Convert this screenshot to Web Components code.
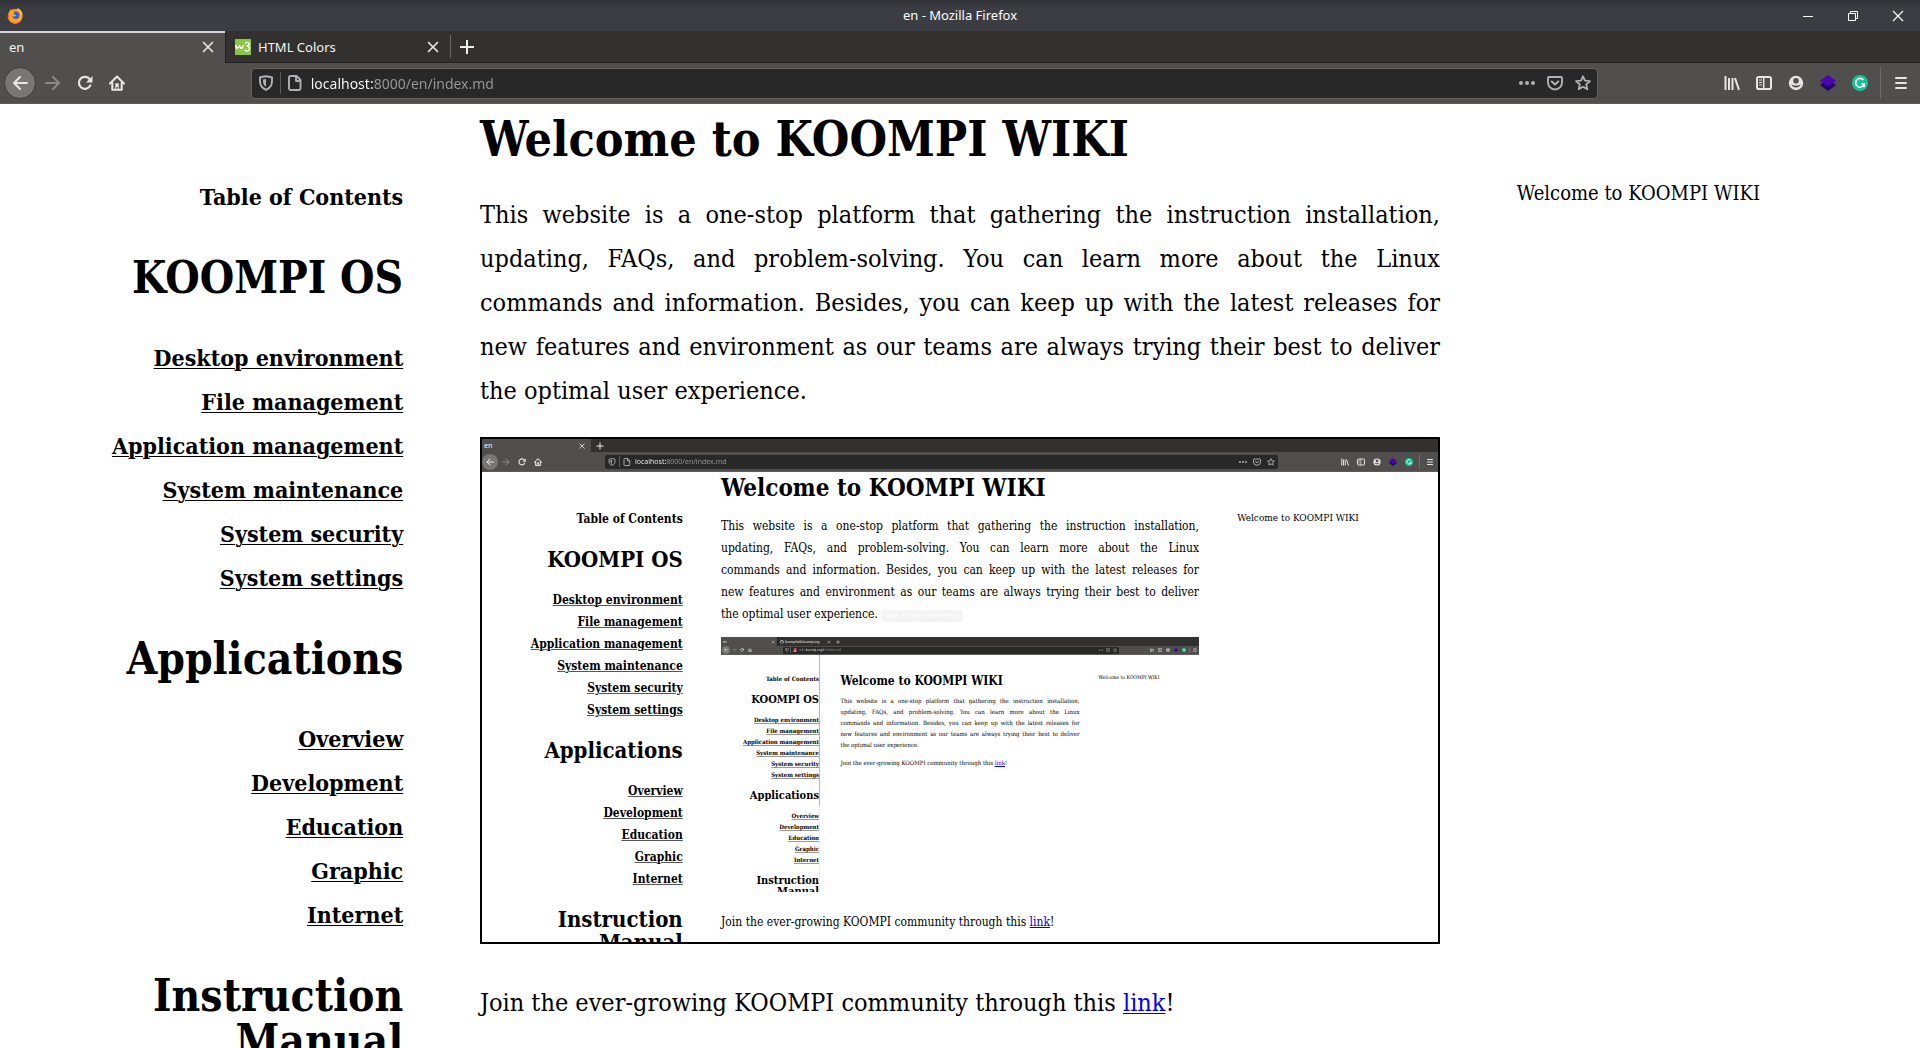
<!DOCTYPE html>
<html lang="en">
<head>
<meta charset="utf-8">
<title>en - Mozilla Firefox</title>
<style>
html,body{margin:0;background:#fff}
body{height:100vh;overflow:hidden}
</style>
</head>
<body>
<browser-window level="1"></browser-window>
<script>
const ICONS={
firefox:'<circle cx="8" cy="8.4" r="7.3" fill="#ff9a1f"/><path d="M1 6C.4 12 4 15.7 8.200 15.700c3.500 0 6-2 7-5-2 2-5 2.600-7.500 1.500C4.500 11 3.500 8 4.500 4z" fill="#ff5a22"/><circle cx="8.300" cy="7.500" r="4" fill="#3b5bd8"/><path d="M2 7c0-3 1-5 2-6 .2 1.500 1 2.200 2.300 2.600C7.800 4 7.500 5.500 6 6c1.500.3 2.500 1 3.500 1-1 2-3.500 2-4.500 1 .5 2.500 3.500 4 6 2.500 3-1.700 3-5 1.200-8C15 4 16 7 15.200 10 13.500 15.500 6 16.500 3 12.500 1.800 11 1.700 9 2 7z" fill="#ffa51e"/><path d="M9.500 1.500c2.500.5 4.500 3 4.700 6l1.300-1C15.500 4 13.500 1 10.500.2z" fill="#ffce3a"/>',
w3:'<rect width="16" height="16" fill="#8cc63f"/><path d="M0.500 6l.8 3h1.600L4.600 7l1 2h1.600L8.700 6M10 4.500c.8-1.700 4-1.500 4 .6 0 1.600-1.500 1.900-2.500 1.900 1.400 0 3 .5 3 2.600 0 2.800-3.800 3-4.800 1" fill="none" stroke="#fff" stroke-width="1.500"/>',
git:'<path fill="#fff" d="M8 1a7 7 0 0 0-2.300 13.600v-2.400C3.500 12.500 3.500 10.500 2.500 10.500c1.500-.5 2 1.300 3.300.8C3 10.800 3 7 4.300 5.800L4.400 4l2 .8h3.200l2-.8.1 1.800c1.300 1.500 1 5-1.600 5.500v3.300A7 7 0 0 0 8 1z"/>',
close:'<path d="M3.500 3.500l9 9m0-9l-9 9" stroke="currentColor" stroke-width="1.700" stroke-linecap="round"/>',
plus:'<path d="M8 1v14M1 8h14" stroke="currentColor" stroke-width="2"/>',
back:'<path d="M15 8H2m6-6L2 8l6 6" fill="none" stroke="currentColor" stroke-width="2" stroke-linecap="round" stroke-linejoin="round"/>',
forward:'<path d="M1 8h13M8 2l6 6-6 6" fill="none" stroke="currentColor" stroke-width="2" stroke-linecap="round" stroke-linejoin="round"/>',
reload:'<path d="M13.300 10.500A6 6 0 1 1 12.800 4.300" fill="none" stroke="currentColor" stroke-width="2.200" stroke-linecap="round"/><path d="M15.500 1v6.500H9z" fill="currentColor"/>',
home:'<path d="M1 8.500L8 1.500l7 7M3.300 8v6.700h9.400V8" fill="none" stroke="currentColor" stroke-width="2.100" stroke-linecap="round" stroke-linejoin="round"/><path d="M6.300 14.500V8.300h3.400v6.200H8.800V12H7.300v2.500z" fill="currentColor"/>',
shield:'<path d="M8 1.300c2 .2 4 .5 6 1.200v3.700c0 4.300-2.300 7-6 8.600-3.700-1.600-6-4.300-6-8.600V2.500C4 1.800 6 1.500 8 1.300z" fill="none" stroke="currentColor" stroke-width="1.900"/><path d="M8 4c-1 .1-2 .3-3 .6v2c0 2.300 1 4 3 5.200z" fill="currentColor"/>',
page:'<path d="M3.500 1h6l4 4v8.500a1.500 1.500 0 0 1-1.500 1.500H3.500A1.500 1.500 0 0 1 2 13.500v-11A1.500 1.500 0 0 1 3.500 1zM9 1.500V6h4.500" fill="none" stroke="currentColor" stroke-width="1.900" stroke-linejoin="round"/>',
insecure:'<rect x="3" y="7" width="10" height="8" rx="1" fill="#ccc"/><path d="M5 7V4.500a3 3 0 0 1 6 0V7" fill="none" stroke="#ccc" stroke-width="2"/><path d="M1 15L14 2" stroke="#f03a50" stroke-width="4"/>',
dots:'<circle cx="2" cy="8" r="2" fill="currentColor"/><circle cx="8" cy="8" r="2" fill="currentColor"/><circle cx="14" cy="8" r="2" fill="currentColor"/>',
pocket:'<path d="M2 2h12a1 1 0 0 1 1 1v4.500a7 7 0 0 1-14 0V3a1 1 0 0 1 1-1z" fill="none" stroke="currentColor" stroke-width="1.900"/><path d="M4.700 6.500L8 9.500l3.300-3" fill="none" stroke="currentColor" stroke-width="2" stroke-linecap="round" stroke-linejoin="round"/>',
star:'<path d="M8 1.300l2 4.400 4.900.5-3.700 3.200 1.100 4.900L8 11.800l-4.300 2.500 1.100-4.900L1.100 6.200 6 5.700z" fill="none" stroke="currentColor" stroke-width="1.800" stroke-linejoin="round"/>',
library:'<path d="M1.500 1v14M5 3v12M8.500 3v12M11 3l4 12" stroke="currentColor" stroke-width="2"/>',
sidebar:'<rect x="1" y="2" width="14" height="12" rx="1.800" fill="none" stroke="currentColor" stroke-width="2"/><path d="M7.700 2v12" stroke="currentColor" stroke-width="1.500"/><path d="M3 5h3M3 7.500h3M3 10h3" stroke="currentColor"/>',
account:'<circle cx="8" cy="8" r="7.200" fill="currentColor"/><circle cx="8" cy="5.800" r="2.800" fill="#514f4d"/><path d="M3.300 9c1 4.700 8.400 4.700 9.400 0-1.500 2-7.900 2-9.400 0z" fill="#514f4d"/>',
cube:'<path d="M8 4.500l8 5.500-8 6-8-6z" fill="#210070"/><path d="M8 0l8 5.800-8 6-8-6z" fill="#4a05b0"/>',
grammarly:'<circle cx="8" cy="8" r="8" fill="#15c39a"/><path d="M11.500 5A4.400 4.400 0 1 0 12.300 9H9.500m2.700 0v3" fill="none" stroke="#fff" stroke-width="1.600"/>',
menu:'<path d="M3 3h10M3 8h10M3 13h10" stroke="currentColor" stroke-width="2" stroke-linecap="round"/>',
min:'<path d="M3 8.500h10" stroke="currentColor"/>',
restore:'<path d="M3.500 5.500h7v7h-7zM5.500 5V3.500h7v7H11" fill="none" stroke="currentColor"/>',
winclose:'<path d="M3 3l10 10M13 3L3 13" stroke="currentColor" stroke-width="1.200"/>'
};

customElements.define('ui-icon',class extends HTMLElement{
  connectedCallback(){
    if(this.shadowRoot)return;
    this.attachShadow({mode:'open'}).innerHTML=`<style>:host{display:block;flex:none;width:var(--icon,16px);height:var(--icon,16px)}svg{display:block;width:100%;height:100%}</style><svg viewBox="0 0 16 16" fill="none" aria-hidden="true">${ICONS[this.getAttribute('name')]}</svg>`;
  }
});

customElements.define('title-bar',class extends HTMLElement{
  connectedCallback(){
    this.attachShadow({mode:'open'}).innerHTML=`<style>
    :host{display:grid;grid-template-columns:1fr auto 1fr;align-items:center;height:31px;background:linear-gradient(#2f3034,#3c3d43 8px);color:#fcfcfc;font:13px/29px "Noto Sans",sans-serif}
    .app{padding-left:7px}
    .win{display:flex;justify-content:flex-end}
    button{all:unset;width:45px;height:30px;display:grid;place-items:center}
    </style><span class="app"><ui-icon name="firefox"></ui-icon></span><slot></slot>
    <div class="win"><button aria-label="Minimize"><ui-icon name="min"></ui-icon></button><button aria-label="Restore"><ui-icon name="restore"></ui-icon></button><button aria-label="Close"><ui-icon name="winclose"></ui-icon></button></div>`;
  }
});

customElements.define('browser-tab',class extends HTMLElement{
  connectedCallback(){
    const icon=this.getAttribute('icon');
    this.attachShadow({mode:'open'}).innerHTML=`<style>
    :host{display:flex;align-items:center;box-sizing:border-box;width:var(--tab);padding:var(--tabpad);gap:var(--tabgap);color:#f5f5f5}
    :host([active]){background:#514f4d;box-shadow:inset 0 var(--topline) #d4d4d8}
    :host(:not([active])){border-left:1px solid #222;border-bottom:var(--edge) solid #232221}
    slot{display:block;flex:1;white-space:nowrap}
    button{all:unset;display:block;color:#e6e6e6;--icon:calc(var(--k)*4)}
    </style>${icon?`<ui-icon name="${icon}"></ui-icon>`:''}<slot></slot><button aria-label="Close tab"><ui-icon name="close"></ui-icon></button>`;
  }
});

customElements.define('browser-chrome',class extends HTMLElement{
  connectedCallback(){
    const b=(n,l,c='')=>`<button class="${c}" aria-label="${l}"><ui-icon name="${n}"></ui-icon></button>`;
    const third=this.getAttribute('level')==='3';
    const url=third?'wiki.koompi.org/en/index.md':'localhost:8000/en/index.md';
    this.attachShadow({mode:'open'}).innerHTML=`<style>
    :host{display:block;font:var(--ui)/normal "Noto Sans",sans-serif;--icon:calc(var(--k)*4)}
    .tabs{display:flex;height:var(--tabs);background:#33312f}
    .new{display:flex;flex:1;align-items:center;border-bottom:var(--edge) solid #232221;color:#f0f0f0}
    .new i{width:1px;height:75%;background:var(--sep)}
    .bar{display:flex;align-items:center;box-sizing:border-box;height:var(--bar);padding:0 var(--pad-right) 0 var(--pad-left);background:#514f4d;border-bottom:1px solid #5e5c5a;color:#e6e6e4}
    button{all:unset;flex:none;display:grid;place-items:center;width:calc(var(--k)*8);height:calc(var(--k)*8)}
    .back{box-sizing:border-box;margin-right:var(--edge);border-radius:50%;background:#787775;border:var(--edge) solid #3c3b3a}
    .off{color:#8b8a88}
    .spring{flex:7}
    form{display:flex;align-items:center;flex:80;box-sizing:border-box;height:var(--url);margin:0;border:var(--edge) solid #656462;border-radius:var(--k);background:#282828;color:#b1b1b3}
    form button{width:calc(var(--k)*7);height:100%}
    form i{width:1px;height:75%;background:#5c5c5c}
    input{all:unset;flex:1;min-width:0;font-size:var(--urlfont);padding-left:var(--line);color:transparent;background:${third?'linear-gradient(90deg,#999 8px,#fff 8px 26px,#999 26px)':'linear-gradient(90deg,#fff calc(var(--line) + var(--host)),#999 0)'};-webkit-background-clip:text;background-clip:text}
    .div{width:1px;height:80%;margin:0 var(--k);background:#6e6c6a}
    </style>
    <div class="tabs"><slot></slot><div class="new"><i></i>${b('plus','New tab')}</div></div>
    <div class="bar">${b('back','Back','back')}${b('forward','Forward','off')}${b('reload','Reload')}${b('home','Home')}
    <div class="spring"></div>
    <form>${b('shield','Tracking protection')}<i></i>${b(third?'insecure':'page','Site information')}<input aria-label="Address" value="${url}">${b('dots','Page actions')}${b('pocket','Save to Pocket')}${b('star','Bookmark')}</form>
    <div class="spring"></div>
    ${b('library','Library')}${b('sidebar','Sidebars')}${b('account','Account')}${b('cube','Cube')}${b('grammarly','Grammarly')}<span class="div"></span>${b('menu','Menu')}</div>`;
  }
});

customElements.define('wiki-toc',class extends HTMLElement{
  connectedCallback(){
    const list=(t,items)=>`<h2>${t}</h2><ul>${items.map(i=>`<li><a href="#">${i}</a></li>`).join('')}</ul>`;
    this.attachShadow({mode:'open'}).innerHTML=`<style>
    :host{display:block;text-align:right;font-weight:bold;font-size:var(--toc);line-height:var(--pitch);white-space:nowrap}
    p{margin:0}
    h2{margin:var(--before) 0 var(--after);font-size:var(--h2);line-height:var(--h2line)}
    ul{list-style:none;margin:0;padding:0}
    a{color:inherit;text-decoration-color:var(--rule);text-decoration-thickness:1px;text-underline-offset:var(--line)}
    </style><p>Table of Contents</p>
    ${list('KOOMPI OS',['Desktop environment','File management','Application management','System maintenance','System security','System settings'])}
    ${list('Applications',['Overview','Development','Education','Graphic','Internet'])}
    <h2>Instruction<br>Manual</h2>`;
  }
});

customElements.define('wiki-article',class extends HTMLElement{
  connectedCallback(){
    const n=+this.getAttribute('level');
    this.attachShadow({mode:'open'}).innerHTML=`<style>
    :host{display:block;font-size:var(--body);line-height:var(--pitch)}
    h1{margin:0 0 var(--gap);font-size:var(--h1);line-height:var(--h1line);white-space:nowrap}
    p{margin:0}
    .intro span{display:block;white-space:nowrap;text-align:justify;text-align-last:justify}
    .intro span:last-child{text-align-last:left}
    figure{box-sizing:border-box;margin:var(--gap) 0 var(--join);overflow:hidden}
    figure.first{border:2px solid #000;aspect-ratio:960/507}
    figure.second{aspect-ratio:480/256}
    .last{margin-top:var(--join)}
    a{color:#00e;text-decoration-thickness:1px;text-underline-offset:var(--line)}
    small{display:inline-block;margin-left:4px;padding:0 2px;background:#f3f3f3;color:#fff;font:7px/12px "Noto Sans",sans-serif}
    </style>
    <h1>Welcome to KOOMPI WIKI</h1>
    <p class="intro"><span>This website is a one-stop platform that gathering the instruction installation,</span><span>updating, FAQs, and problem-solving. You can learn more about the Linux</span><span>commands and information. Besides, you can keep up with the latest releases for</span><span>new features and environment as our teams are always trying their best to deliver</span><span>the optimal user experience.${n===2?'<small>Take a New Screenshot</small>':''}</span></p>
    ${n<3?`<figure class="${n===1?'first':'second'}"><browser-window level="${n+1}"></browser-window></figure>`:''}
    <p class="${n===3?'last':''}">Join the ever-growing KOOMPI community through this <a href="#">link</a>!</p>`;
  }
});

customElements.define('browser-window',class extends HTMLElement{
  connectedCallback(){
    const n=this.getAttribute('level');
    const tabs={1:'<browser-tab active>en</browser-tab><browser-tab icon="w3">HTML Colors</browser-tab>',2:'<browser-tab active>en</browser-tab>',3:'<browser-tab active>en</browser-tab><browser-tab icon="git">koompi/wiki.koompi.org</browser-tab>'}[n];
    this.attachShadow({mode:'open'}).innerHTML=`<style>
    :host{display:block;height:100%;overflow:hidden;background:#fff;color:#000;font-family:"DejaVu Serif Condensed","DejaVu Serif",serif}
    :host([level="1"]){--k:4px;--ui:13px;--urlfont:14px;--tab:225px;--tabpad:0 9px;--tabgap:7px;--topline:2px;--pad-left:4px;--pad-right:3px;--tabs:32px;--bar:41px;--url:31px;--line:2px;--edge:1px;--sep:#6a6866;--host:62px;--rule:#000;
      --body:25px;--toc:23px;--pitch:44px;--h1:48px;--h1line:60px;--h2:44px;--h2line:45px;--before:36px;--after:36px;--gap:24px;--join:37px;--side:20px;--top-toc:71px;--top-main:5px;--top-side:67px}
    :host([level="2"]){--k:2px;--ui:7px;--urlfont:7px;--tab:109px;--tabpad:0 5px 0 2px;--tabgap:2px;--topline:0px;--pad-left:0px;--pad-right:0px;--tabs:13px;--bar:20px;--url:14px;--line:1px;--edge:0px;--sep:transparent;--host:31px;--rule:#555;
      --body:12px;--toc:12px;--pitch:22px;--h1:24px;--h1line:30px;--h2:22px;--h2line:23px;--before:18px;--after:18px;--gap:12px;--join:19px;--side:10px;--top-toc:36px;--top-main:1px;--top-side:35px}
    :host([level="3"]){--k:1px;--ui:3px;--urlfont:3px;--tab:56px;--tabpad:0 2px;--tabgap:1px;--topline:0px;--pad-left:1px;--pad-right:0px;--tabs:9px;--bar:9px;--url:7px;--line:1px;--edge:0px;--sep:transparent;--host:14px;--rule:#999;
      --body:6px;--toc:6px;--pitch:11px;--h1:12px;--h1line:15px;--h2:11px;--h2line:11px;--before:10px;--after:9px;--gap:6px;--join:7px;--side:5px;--top-toc:18px;--top-main:19px;--top-side:17px}
    .page{display:grid;grid-template-columns:minmax(0,1fr) minmax(0,2fr) minmax(0,1fr)}
    nav{padding:var(--top-toc) 16% 0 0}
    :host([level="3"]) nav{padding-right:18%;background:linear-gradient(#b8b8b8 0 60%,#eee 60%) 83% 0/1px 100% no-repeat}
    main{padding-top:var(--top-main)}
    aside{padding:var(--top-side) 0 0 16%;font-size:var(--side);line-height:var(--pitch);white-space:nowrap}
    </style>
    ${n==='1'?'<title-bar>en - Mozilla Firefox</title-bar>':''}
    <browser-chrome level="${n}">${tabs}</browser-chrome>
    <div class="page"><nav><wiki-toc></wiki-toc></nav><main><wiki-article level="${n}"></wiki-article></main><aside>Welcome to KOOMPI WIKI</aside></div>`;
    if(n==='1')this.style.height='100vh';
  }
});
</script>
</body>
</html>
